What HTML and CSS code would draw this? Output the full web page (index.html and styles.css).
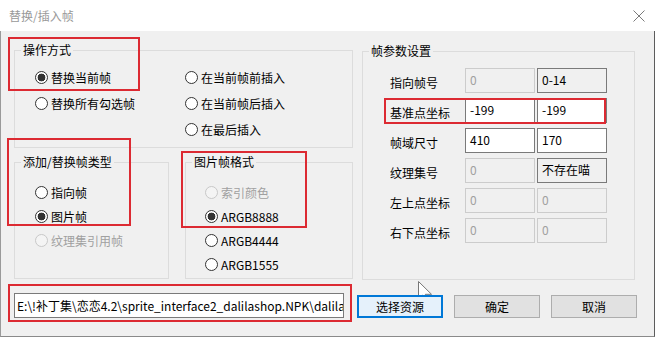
FILE: index.html
```html
<!DOCTYPE html>
<html lang="zh-CN">
<head>
    <meta charset="UTF-8">
    <title>替换/插入帧</title>
    <link rel="stylesheet" href="styles.css">
</head>
<body>
    <div class="window">
        <div class="titlebar">
            <span class="title">替换/插入帧</span>
            <svg class="close" width="12" height="12" viewBox="0 0 12 12">
                <path d="M0.5 0.5 L11.5 11.5 M11.5 0.5 L0.5 11.5" stroke="#7a7a7a" stroke-width="1" fill="none"/>
            </svg>
        </div>
        <div class="client">
            <div class="top">
                <div class="left-col">
                    <fieldset class="group group-mode">
                        <legend>操作方式</legend>
                        <div class="mode-grid">
                            <span class="radio checked">替换当前帧</span>
                            <span class="radio">在当前帧前插入</span>
                            <span class="radio">替换所有勾选帧</span>
                            <span class="radio">在当前帧后插入</span>
                            <span></span>
                            <span class="radio">在最后插入</span>
                        </div>
                    </fieldset>
                    <div class="group-row">
                        <fieldset class="group group-type">
                            <legend>添加/替换帧类型</legend>
                            <div class="radio-list">
                                <span class="radio">指向帧</span>
                                <span class="radio checked">图片帧</span>
                                <span class="radio disabled">纹理集引用帧</span>
                            </div>
                        </fieldset>
                        <fieldset class="group group-format">
                            <legend>图片帧格式</legend>
                            <div class="radio-list">
                                <span class="radio disabled">索引颜色</span>
                                <span class="radio checked">ARGB8888</span>
                                <span class="radio">ARGB4444</span>
                                <span class="radio">ARGB1555</span>
                            </div>
                        </fieldset>
                    </div>
                </div>
                <fieldset class="group group-params">
                    <legend>帧参数设置</legend>
                    <div class="params">
                        <span class="label">指向帧号</span>
                        <span class="field disabled">0</span>
                        <span class="field readonly">0-14</span>

                        <span class="label">基准点坐标</span>
                        <span class="field">-199</span>
                        <span class="field">-199</span>

                        <span class="label">帧域尺寸</span>
                        <span class="field">410</span>
                        <span class="field">170</span>

                        <span class="label">纹理集号</span>
                        <span class="field disabled">0</span>
                        <span class="field readonly">不存在喵</span>

                        <span class="label">左上点坐标</span>
                        <span class="field disabled">0</span>
                        <span class="field disabled">0</span>

                        <span class="label">右下点坐标</span>
                        <span class="field disabled">0</span>
                        <span class="field disabled">0</span>
                    </div>
                </fieldset>
            </div>
            <div class="bottom">
                <div class="path">E:\!补丁集\恋恋4.2\sprite_interface2_dalilashop.NPK\dalila_s</div>
                <button class="btn focused">选择资源</button>
                <button class="btn">确定</button>
                <button class="btn">取消</button>
            </div>
        </div>

        <!-- annotation boxes drawn over the dialog -->
        <div class="mark mark-mode"></div>
        <div class="mark mark-type"></div>
        <div class="mark mark-format"></div>
        <div class="mark mark-base"></div>
        <div class="mark mark-path"></div>

        <svg class="cursor" width="16" height="22" viewBox="0 0 16 22">
            <path d="M0.5 0.5 V18 L4.8 14 L7.5 20.5 L10 19.5 L7.3 13.3 H13.5 Z" fill="#fff" stroke="#777" stroke-width="1"/>
        </svg>
    </div>
</body>
</html>
```

FILE: styles.css
```css
body {
    margin: 0;
    padding: 0;
    font-family: "Noto Sans CJK SC", "Microsoft YaHei", sans-serif;
    font-size: 12px;
    color: #000;
    background-color: #f0f0f0;
}
.window {
    position: relative;
    z-index: 0;
    width: 655px;
    height: 337px;
    background-color: #f0f0f0;
    overflow: hidden;
}
.titlebar {
    height: 31px;
    background-color: #fff;
    display: flex;
    align-items: center;
    justify-content: space-between;
    padding: 0 10px 0 9px;
}
.title {
    color: #999;
    line-height: 16px;
}
.close {
    display: block;
}
.client {
    height: 306px;
    box-sizing: border-box;
    padding: 11px 0 0 13px;
    border-left: 1px solid #9a9a9a;
    border-right: 1px solid #5c5c5c;
    border-bottom: 1px solid #8a8a8a;
}
.top {
    display: flex;
    align-items: flex-start;
}
.left-col {
    width: 339px;
}
.group {
    margin: 0;
    padding: 0;
    border: 1px solid #dcdcdc;
    box-sizing: border-box;
    min-width: 0;
}
.group legend {
    margin-left: 6px;
    padding: 0 2px;
    line-height: 16px;
}
.group-mode {
    width: 339px;
    height: 106px;
}
.mode-grid {
    display: grid;
    grid-template-columns: 150px 1fr;
    grid-auto-rows: 26px;
    padding: 6px 0 0 20px;
}
.group-row {
    display: flex;
    gap: 16px;
    margin-top: 6px;
}
.group-type {
    width: 155px;
    height: 125px;
}
.group-format {
    width: 168px;
    height: 125px;
}
.radio-list {
    display: grid;
    grid-auto-rows: 24px;
    padding: 10px 0 0 20px;
}
.group-format .radio-list {
    padding-left: 19px;
}
.radio {
    display: flex;
    align-items: center;
    gap: 3px;
    white-space: nowrap;
}
.radio::before {
    content: "";
    width: 13px;
    height: 13px;
    box-sizing: border-box;
    border: 1px solid #333;
    border-radius: 50%;
    background-color: #fff;
    flex: none;
}
.radio.checked::before {
    background: radial-gradient(circle, #333 0 3.6px, #fff 4.2px);
}
.radio.disabled {
    color: #a0a0a0;
}
.radio.disabled::before {
    border-color: #c8c8c8;
    background-color: #f4f4f4;
}
.group-params {
    width: 273px;
    height: 237px;
    margin-left: 9px;
    margin-top: 1px;
}
.params {
    display: grid;
    grid-template-columns: 73px 70px 70px;
    grid-auto-rows: 25px;
    column-gap: 2px;
    row-gap: 5px;
    padding: 9px 0 0 27px;
}
.label {
    display: flex;
    align-items: center;
    padding-top: 3px;
    white-space: nowrap;
}
.field {
    box-sizing: border-box;
    border: 1px solid #7a7a7a;
    background-color: #fff;
    padding-left: 4px;
    line-height: 21px;
    white-space: nowrap;
    overflow: hidden;
}
.field.readonly {
    background-color: #f0f0f0;
}
.field.disabled {
    background-color: #f0f0f0;
    border-color: #cccccc;
    color: #a0a0a0;
}
.bottom {
    display: flex;
    align-items: flex-end;
    gap: 11px;
    margin-top: 13px;
}
.path {
    width: 330px;
    height: 25px;
    box-sizing: border-box;
    border: 1px solid #7a7a7a;
    background-color: #fff;
    padding-left: 2px;
    line-height: 23px;
    white-space: nowrap;
    overflow: hidden;
    margin-right: 2px;
}
.btn {
    width: 86px;
    height: 23px;
    box-sizing: border-box;
    background-color: #e1e1e1;
    border: 1px solid #adadad;
    border-radius: 0;
    font-family: inherit;
    font-size: 12px;
    color: #000;
    padding: 0;
    margin: 0;
}
.btn.focused {
    background-color: #e5f1fb;
    border: 2px solid #0078d7;
}
.mark {
    position: absolute;
    box-sizing: border-box;
    border: 2px solid #dc2a32;
}
.mark-mode {
    left: 8px;
    top: 37px;
    width: 132px;
    height: 54px;
}
.mark-type {
    left: 7px;
    top: 138px;
    width: 124px;
    height: 88px;
}
.mark-format {
    left: 181px;
    top: 151px;
    width: 126px;
    height: 77px;
}
.mark-base {
    left: 384px;
    top: 98px;
    width: 222px;
    height: 26px;
}
.mark-path {
    left: 8px;
    top: 284px;
    width: 344px;
    height: 38px;
}
.cursor {
    position: absolute;
    left: 418px;
    top: 281px;
    z-index: -1;
}
```
